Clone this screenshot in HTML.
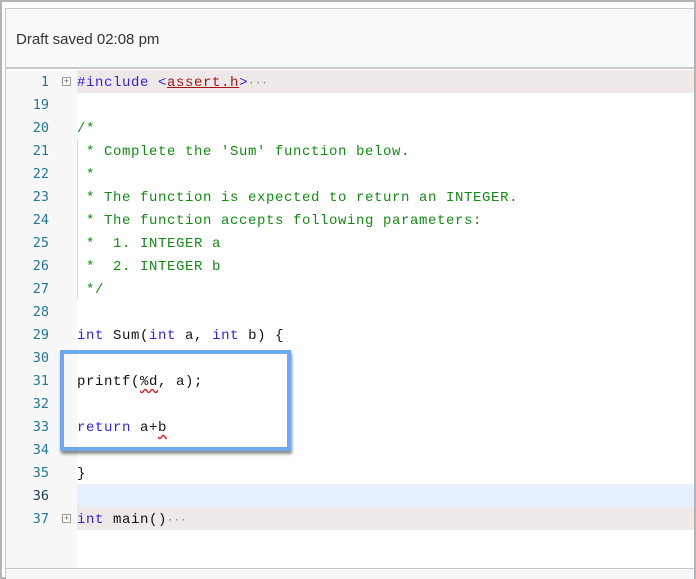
<!DOCTYPE html>
<html><head><meta charset="utf-8"><style>
*{margin:0;padding:0;box-sizing:border-box}
body{width:696px;height:579px;background:#fff;position:relative;overflow:hidden;font-family:"Liberation Sans",sans-serif}
.outer{position:absolute;left:0;top:0;width:696px;height:579px;border:2px solid #b4b4b8;border-top-width:2px}
.panel{position:absolute;left:5px;top:8px;width:689px;height:569px;border-top:1px solid #c8c8cc;border-left:1px solid #c8c8cc}
.hdr{position:absolute;left:6px;top:9px;width:688px;height:60px;background:#f7f9fb;border-bottom:2px solid #c8c9cc}
.hdr span{position:absolute;left:10px;top:22px;font-size:15px;color:#333}
.gut{position:absolute;left:6px;top:71px;width:71px;height:497px;background:#f8f8f8}
.row{position:absolute;left:6px;width:688px;height:23px}
.num{position:absolute;right:645px;width:40px;text-align:right;font:13.5px "DejaVu Sans Mono","Liberation Mono",monospace;color:#237893;top:4px}
.code{position:absolute;left:71px;top:5px;font:14px "Liberation Mono",monospace;letter-spacing:0.6px;white-space:pre;color:#111}
.k{color:#3a22d0}.c{color:#148a14}.r{color:#a31515;text-decoration:underline}
.fold{position:absolute;left:56px;top:7px;width:9px;height:9px;border:1px solid #999;font-size:9px;line-height:7px;text-align:center;color:#666;background:#fff}
.dots{color:#888;font-size:11px;letter-spacing:0}
.sq{text-decoration:underline wavy #e02020;text-underline-offset:3px}
.box{position:absolute;left:60px;top:350px;width:231px;height:101px;border:4px solid #6ea9ee;box-shadow:1px 3px 3px rgba(0,0,0,.45)}
.bot{position:absolute;left:6px;top:568px;width:688px;height:11px;background:#f6f7f9;border-top:1px solid #c8c8cc}
.guide{position:absolute;left:77px;width:1px;background:#ddd}
</style></head><body>
<div class="outer"></div><div class="panel"></div>
<div class="hdr"><span>Draft saved 02:08 pm</span></div>
<div class="gut"></div>
<div class="row" style="top:70px;left:77px;width:617px;background:#efe8e8"></div>
<div class="row" style="top:484px;left:77px;width:617px;background:#e6f0fd"></div>
<div class="row" style="top:507px;left:77px;width:617px;background:#efe8e8"></div>
<div class="guide" style="top:139px;height:161px"></div>

<div class="row" style="top:70px"><div class="num">1</div><div class="fold">+</div><div class="code"><span class="k">#include</span> <span class="k">&lt;</span><span class="r">assert.h</span><span class="k">&gt;</span><span class="dots">···</span></div></div>
<div class="row" style="top:93px"><div class="num">19</div></div>
<div class="row" style="top:116px"><div class="num">20</div><div class="code c">/*</div></div>
<div class="row" style="top:139px"><div class="num">21</div><div class="code c"> * Complete the 'Sum' function below.</div></div>
<div class="row" style="top:162px"><div class="num">22</div><div class="code c"> *</div></div>
<div class="row" style="top:185px"><div class="num">23</div><div class="code c"> * The function is expected to return an INTEGER.</div></div>
<div class="row" style="top:208px"><div class="num">24</div><div class="code c"> * The function accepts following parameters:</div></div>
<div class="row" style="top:231px"><div class="num">25</div><div class="code c"> *  1. INTEGER a</div></div>
<div class="row" style="top:254px"><div class="num">26</div><div class="code c"> *  2. INTEGER b</div></div>
<div class="row" style="top:277px"><div class="num">27</div><div class="code c"> */</div></div>
<div class="row" style="top:300px"><div class="num">28</div></div>
<div class="row" style="top:323px"><div class="num">29</div><div class="code"><span class="k">int</span> Sum(<span class="k">int</span> a, <span class="k">int</span> b) {</div></div>
<div class="row" style="top:346px"><div class="num">30</div></div>
<div class="row" style="top:369px"><div class="num">31</div><div class="code">printf(<span class="sq">%d</span>, a);</div></div>
<div class="row" style="top:392px"><div class="num">32</div></div>
<div class="row" style="top:415px"><div class="num">33</div><div class="code"><span class="k">return</span> a+<span class="sq">b</span></div></div>
<div class="row" style="top:438px"><div class="num">34</div></div>
<div class="row" style="top:461px"><div class="num">35</div><div class="code">}</div></div>
<div class="row" style="top:484px"><div class="num" style="color:#1a3a50">36</div></div>
<div class="row" style="top:507px"><div class="num">37</div><div class="fold">+</div><div class="code"><span class="k">int</span> main()<span class="dots">···</span></div></div>
<div class="box"></div>
<div class="bot"></div>
</body></html>
